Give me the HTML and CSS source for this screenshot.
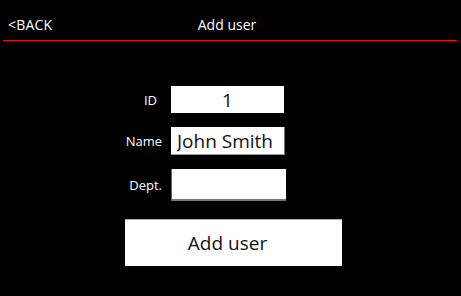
FILE: index.html
```html
<!DOCTYPE html>
<html lang="en">
<head>
    <meta charset="UTF-8">
    <title>Add user</title>
    <link rel="stylesheet" href="styles.css">
</head>
<body>
    <div class="header">
        <span class="back">&lt;BACK</span>
        <span class="title">Add user</span>
        <span></span>
    </div>

    <div class="form">
        <div class="row">
            <label class="label label-id" for="id-field">ID</label>
            <input id="id-field" class="field field-id" value="1">
        </div>
        <div class="row">
            <label class="label" for="name-field">Name</label>
            <input id="name-field" class="field field-name" value="John Smith">
        </div>
        <div class="row">
            <label class="label" for="dept-field">Dept.</label>
            <input id="dept-field" class="field field-dept" value="">
        </div>
        <button class="add-btn">Add user</button>
    </div>
</body>
</html>
```

FILE: styles.css
```css
* {
    margin: 0;
    padding: 0;
    box-sizing: border-box;
}
body {
    font-family: "Open Sans", "Noto Sans", sans-serif;
    background-color: #000;
    color: #fff;
}
.header {
    display: grid;
    grid-template-columns: 1fr auto 1fr;
    align-items: center;
    height: 41px;
    margin: 0 4px 0 3px;
    padding: 9px 5px 0 5px;
    border-bottom: 1px solid #e8101c;
    font-size: 14px;
}
.back {
    letter-spacing: 0.2px;
}
.title {
    margin-left: -6px;
}
.form {
    display: flex;
    flex-direction: column;
    align-items: flex-start;
    gap: 14px;
    padding: 45px 0 0 112px;
}
.row {
    display: flex;
    align-items: center;
}
.label {
    width: 50px;
    margin-right: 9px;
    text-align: right;
    font-size: 13px;
}
.label-id {
    padding-right: 5px;
}
.field {
    width: 115px;
    height: 28px;
    border: none;
    outline: none;
    background-color: #fff;
    color: #111;
    font-family: inherit;
    font-size: 19px;
    padding: 0 6px;
}
.field-id {
    width: 113px;
    height: 27px;
    text-align: center;
}
.field-name {
    width: 114px;
    border-right: 1px solid #777;
    border-bottom: 1px solid #999;
}
.field-dept {
    height: 32px;
    border-left: 1px solid #666;
    border-bottom: 2px solid #777;
}
.add-btn {
    width: 217px;
    height: 47px;
    margin: 4px 0 0 13px;
    border: none;
    border-top: 1px solid #aaa;
    background-color: #fff;
    color: #111;
    font-family: inherit;
    font-size: 19px;
    padding-right: 12px;
}
```
